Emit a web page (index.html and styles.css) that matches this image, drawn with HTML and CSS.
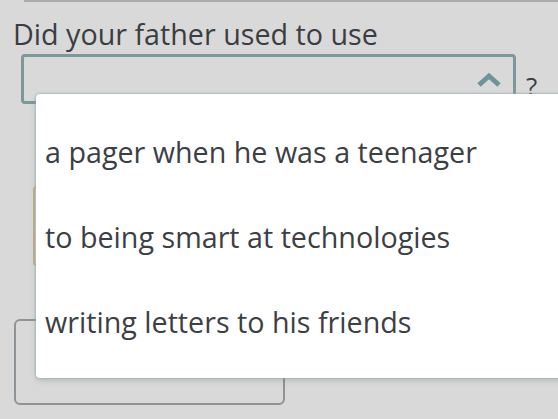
FILE: index.html
```html
<!DOCTYPE html>
<html lang="en">
<head>
    <meta charset="UTF-8">
    <meta name="viewport" content="width=device-width, initial-scale=1.0">
    <title>Question</title>
    <link rel="stylesheet" href="styles.css">
</head>
<body>
    <div class="page">
        <div class="prev-box"></div>

        <!-- Question -->
        <div class="question">Did your father used to use</div>
        <div class="answer-row">
            <div class="select-box">
                <svg class="chevron" width="26" height="16" viewBox="0 0 26 16">
                    <path d="M3 13 L13 4 L23 13" fill="none" stroke="#6f9396" stroke-width="5" stroke-linejoin="miter"/>
                </svg>
            </div>
            <span class="qmark">?</span>
        </div>

        <!-- Stuff behind the menu -->
        <div class="hidden-btn"></div>
        <div class="answer-area"></div>

        <!-- Open dropdown -->
        <ul class="dropdown">
            <li>a pager when he was a teenager</li>
            <li>to being smart at technologies</li>
            <li>writing letters to his friends</li>
        </ul>
    </div>
</body>
</html>
```

FILE: styles.css
```css
* {
    margin: 0;
    padding: 0;
    box-sizing: border-box;
}

html, body {
    width: 558px;
    height: 419px;
    overflow: hidden;
}

body {
    font-family: "Open Sans", "Noto Sans", sans-serif;
    background: #d9d9d9;
    color: #3a3e42;
}

.page {
    position: relative;
    height: 419px;
}

.prev-box {
    margin-left: 24px;
    height: 2px;
    border-bottom: 2px solid #a9abad;
}

.question {
    font-size: 28.7px;
    line-height: 36px;
    margin-top: 14px;
    padding-left: 13px;
}

.answer-row {
    display: flex;
    align-items: flex-end;
    margin-top: 2px;
    padding-left: 21px;
}

.select-box {
    width: 495px;
    height: 50px;
    border: 3px solid #7d989b;
    border-radius: 4px;
    display: flex;
    justify-content: flex-end;
    align-items: flex-start;
    padding: 15px 11px 0 0;
}

.qmark {
    font-size: 26px;
    line-height: 30px;
    margin-left: 10px;
    margin-bottom: 3px;
}

.hidden-btn {
    margin: 82px 0 0 33px;
    width: 60px;
    height: 80px;
    border: 2px solid #c7b08a;
    border-radius: 4px;
}

.answer-area {
    margin: 53px 0 0 14px;
    width: 271px;
    height: 86px;
    border: 2px solid #8e9397;
    border-radius: 6px;
}

.dropdown {
    position: absolute;
    left: 36px;
    top: 94px;
    width: 540px;
    height: 284px;
    background: #ffffff;
    border-radius: 4px;
    list-style: none;
    padding-top: 16px;
    box-shadow: 0 0 2px 1px rgba(150, 175, 178, 0.7), 0 3px 6px rgba(0, 0, 0, 0.12);
}

.dropdown li {
    font-size: 28.7px;
    line-height: 36px;
    padding: 24px 0 25px 9px;
    color: #3c4044;
}
```
